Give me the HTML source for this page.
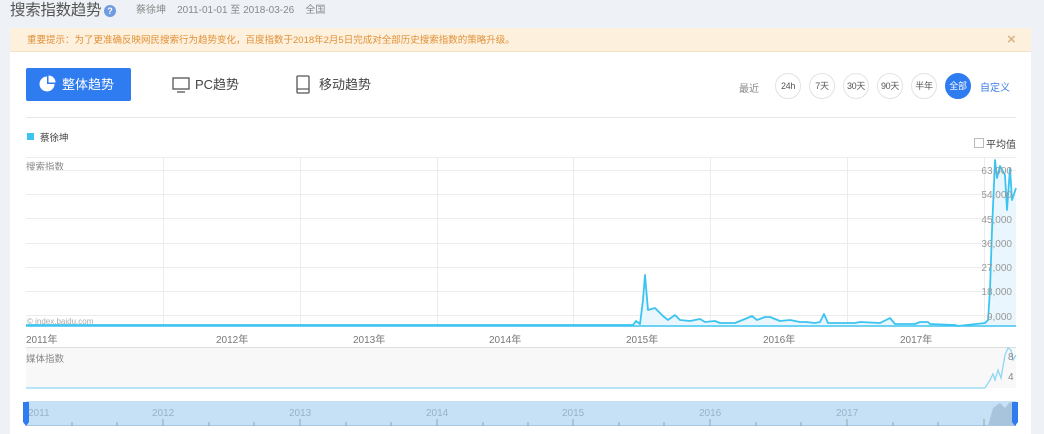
<!DOCTYPE html>
<html><head><meta charset="utf-8"><style>
*{margin:0;padding:0;box-sizing:border-box}
body{width:1044px;height:434px;overflow:hidden;background:#eef1f5;font-family:"Liberation Sans","Noto Sans CJK SC",sans-serif;position:relative;color:#333}
.a{position:absolute;white-space:nowrap}
.c{position:absolute;width:26px;height:26px;border:1px solid #e3e3e3;border-radius:50%;font-size:9px;text-align:center;line-height:24px;color:#555;top:73px;letter-spacing:-0.3px}
</style></head><body>
<div class="a" style="left:10px;top:1px;font-size:15.5px;color:#555;line-height:20px;letter-spacing:-0.3px">搜索指数趋势</div>
<div class="a" style="left:104px;top:5px;width:12px;height:12px;border-radius:50%;background:#6f9be0;color:#fff;font-size:9px;text-align:center;line-height:12px;font-weight:bold">?</div>
<div class="a" style="left:136px;top:4px;font-size:10px;color:#888;line-height:14px">蔡徐坤 &nbsp;&nbsp; 2011-01-01 至 2018-03-26 &nbsp;&nbsp; 全国</div>
<div class="a" style="left:10px;top:28px;width:1021px;height:24px;background:#fdf0dc;border-bottom:1px solid #f5e2c4"></div>
<div class="a" style="left:27px;top:34px;font-size:9.5px;color:#e0913a;line-height:13px">重要提示：为了更准确反映网民搜索行为趋势变化，百度指数于2018年2月5日完成对全部历史搜索指数的策略升级。</div>
<div class="a" style="left:1007px;top:31px;font-size:15px;color:#dcb58a;font-weight:bold">×</div>
<div class="a" style="left:10px;top:52px;width:1021px;height:382px;background:#fff"></div>
<div class="a" style="left:26px;top:68px;width:105px;height:33px;background:#2f7bf0;border-radius:2px"></div>
<svg class="a" style="left:38px;top:75px" width="18" height="18"><circle cx="9" cy="9" r="7.5" fill="#fff"/><path d="M9 1.5V9H16.5A7.5 7.5 0 0 0 9 1.5Z" fill="#2f7bf0"/><path d="M10.5 0.5V7.5H17.5A7 7 0 0 0 10.5 0.5Z" fill="#fff"/></svg>
<div class="a" style="left:62px;top:77px;font-size:13px;color:#fff;line-height:16px">整体趋势</div>
<svg class="a" style="left:172px;top:76px" width="18" height="18"><rect x="1" y="2" width="16" height="11" fill="none" stroke="#555" stroke-width="1.3"/><path d="M5 16H13" stroke="#555" stroke-width="1.3"/></svg>
<div class="a" style="left:195px;top:77px;font-size:13px;color:#444;line-height:16px">PC趋势</div>
<svg class="a" style="left:296px;top:75px" width="14" height="19"><rect x="1" y="1" width="12" height="17" rx="1" fill="none" stroke="#555" stroke-width="1.3"/><path d="M1 14H13" stroke="#555" stroke-width="1.2"/></svg>
<div class="a" style="left:319px;top:77px;font-size:13px;color:#444;line-height:16px">移动趋势</div>
<div class="a" style="left:739px;top:80px;font-size:10px;color:#888">最近</div>
<div class="c" style="left:775px">24h</div>
<div class="c" style="left:809px">7天</div>
<div class="c" style="left:843px">30天</div>
<div class="c" style="left:877px">90天</div>
<div class="c" style="left:911px">半年</div>
<div class="c" style="left:945px;background:#2f7bf0;border-color:#2f7bf0;color:#fff">全部</div>
<div class="a" style="left:980px;top:79px;font-size:10px;color:#3f7fe8">自定义</div>
<div class="a" style="left:26px;top:117px;width:990px;border-top:1px solid #e6e6e6"></div>
<div class="a" style="left:27px;top:133px;width:7px;height:7px;background:#3cc4f0"></div>
<div class="a" style="left:40px;top:130px;font-size:9.5px;color:#444">蔡徐坤</div>
<div class="a" style="left:974px;top:138px;width:10px;height:10px;border:1px solid #bbb"></div>
<div class="a" style="left:986px;top:136px;font-size:10px;color:#444">平均值</div>
<div class="a" style="left:26px;top:159px;font-size:9.5px;color:#888">搜索指数</div>
<svg class="a" style="left:0;top:150px" width="1044" height="284">
<g stroke="#ececec" stroke-width="1">
<path d="M26 7.5H1016M26 20.5H1016M26 44.5H1016M26 68.5H1016M26 93.5H1016M26 117.5H1016M26 141.5H1016M26 165.5H1016"/>
<path d="M163.5 7V176M300.5 7V176M437.5 7V176M573.5 7V176M710.5 7V176M847.5 7V176M984.5 7V176"/>
</g>
<path d="M26 175H633L636 171L640 174L643 150L645 125L648 160L655 158L663 166L668 170L675 165L680 170L690 171L700 169L705 172L715 171L720 173L735 173L745 169L752 166L757 170L765 167L770 167L780 171L790 170L800 172L806 172L815 173L820 172L824 164L828 173L855 173L860 172L880 173L890 168L895 174L915 174L920 172L928 172L930 174L955 175L958 176L985 173L988 170L990 140L992 80L995 10L997 28L1000 16L1005 25L1007 60L1010 18L1012 50L1016 38V175Z" fill="#e9f6fd"/>
<path d="M26 175H633L636 171L640 174L643 150L645 125L648 160L655 158L663 166L668 170L675 165L680 170L690 171L700 169L705 172L715 171L720 173L735 173L745 169L752 166L757 170L765 167L770 167L780 171L790 170L800 172L806 172L815 173L820 172L824 164L828 173L855 173L860 172L880 173L890 168L895 174L915 174L920 172L928 172L930 174L955 175L958 176L985 173L988 170L990 140L992 80L995 10L997 28L1000 16L1005 25L1007 60L1010 18L1012 50L1016 38" fill="none" stroke="#3cc4f0" stroke-width="1.8" stroke-linejoin="round"/>
<path d="M26 176H1016" stroke="#3cc4f0" stroke-width="1.5"/>
<g font-size="10" fill="#999" text-anchor="end" font-family="Liberation Sans,sans-serif">
<text x="1012" y="24">63,000</text><text x="1012" y="48">54,000</text><text x="1012" y="73">45,000</text><text x="1012" y="97">36,000</text><text x="1012" y="121">27,000</text><text x="1012" y="145">18,000</text><text x="1012" y="170">9,000</text>
</g>
<text x="27" y="174" font-size="8" fill="#aaa" font-family="Liberation Sans,sans-serif">© index.baidu.com</text>
<rect x="26" y="198" width="990" height="40" fill="#f8f8f8"/>
<path d="M26 197.5H1016" stroke="#ddd"/>
<path d="M26 238H985L990 230L993 224L995 230L998 220L1001 228L1005 205L1008 198L1011 200L1013 210L1016 205" fill="none" stroke="#8fd6f4" stroke-width="1.3"/>
<text x="1008" y="210" font-size="10" fill="#888">8</text><text x="1008" y="230" font-size="10" fill="#888">4</text>
<rect x="26" y="251" width="990" height="25" fill="#c6e1f5"/>
<path d="M988 276L993 258L1000 253L1005 258L1010 252L1016 255V276Z" fill="#a8c4dd"/>
<path d="M26 275.5H1016" stroke="#a9c7e0"/>
<g stroke="#8aa" stroke-width="1"><path d="M72 272V276M117 272V276M163 269V276M209 272V276M254 272V276M300 269V276M346 272V276M391 272V276M437 269V276M483 272V276M528 272V276M573 269V276M619 272V276M664 272V276M710 269V276M756 272V276M801 272V276M847 269V276M893 272V276M938 272V276M984 269V276"/></g>
<g font-size="10" fill="#9ab0c4" font-family="Liberation Sans,sans-serif"><text x="28" y="266">2011</text><text x="152" y="266">2012</text><text x="289" y="266">2013</text><text x="426" y="266">2014</text><text x="562" y="266">2015</text><text x="699" y="266">2016</text><text x="836" y="266">2017</text></g>
<path d="M23 252H29V272L26 276L23 272Z" fill="#2f7bf0"/>
<path d="M1012 252H1018V272L1015 276L1012 272Z" fill="#2f7bf0"/>
</svg>
<div class="a" style="left:26px;top:331px;font-size:10px;color:#777">2011年</div>
<div class="a" style="left:216px;top:331px;font-size:10px;color:#777">2012年</div>
<div class="a" style="left:353px;top:331px;font-size:10px;color:#777">2013年</div>
<div class="a" style="left:489px;top:331px;font-size:10px;color:#777">2014年</div>
<div class="a" style="left:626px;top:331px;font-size:10px;color:#777">2015年</div>
<div class="a" style="left:763px;top:331px;font-size:10px;color:#777">2016年</div>
<div class="a" style="left:900px;top:331px;font-size:10px;color:#777">2017年</div>
<div class="a" style="left:26px;top:351px;font-size:9.5px;color:#888">媒体指数</div>
</body></html>
